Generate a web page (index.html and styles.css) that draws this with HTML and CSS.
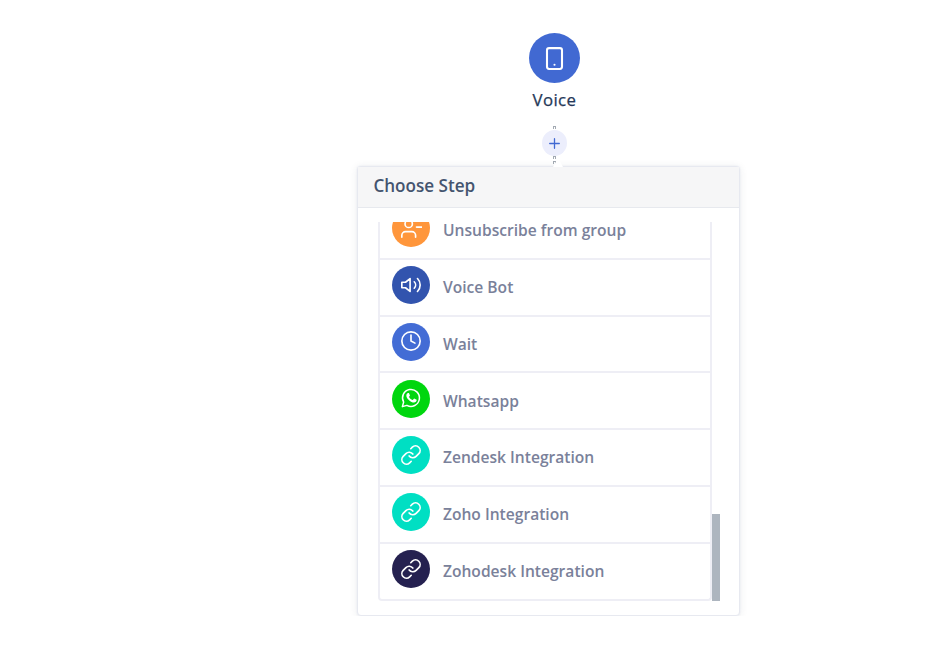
FILE: index.html
```html
<!DOCTYPE html>
<html lang="en">
<head>
<meta charset="utf-8">
<title>Choose Step</title>
<link rel="stylesheet" href="styles.css">
</head>
<body>
<svg class="defs" aria-hidden="true">
  <symbol id="link" viewBox="0 0 24 24"><path d="M10 13a5 5 0 0 0 7.54.54l3-3a5 5 0 0 0-7.07-7.07l-1.72 1.71"/><path d="M14 11a5 5 0 0 0-7.54-.54l-3 3a5 5 0 0 0 7.07 7.07l1.71-1.71"/></symbol>
</svg>
<main class="flow">
  <div class="node">
    <div class="node-icon"><svg viewBox="0 0 24 24"><rect x="4.8" y="2" width="14.4" height="20" rx="2"/><path d="M12 18h.01"/></svg></div>
    <div class="node-label">Voice</div>
  </div>
  <div class="connector">
    <span class="dash"></span>
    <button class="add" aria-label="Add step"><svg viewBox="0 0 11 11"><path d="M5.5 .7v9.6M.7 5.5h9.6"/></svg></button>
    <span class="dash"></span><span class="dash gap"></span>
  </div>
  <section class="panel">
    <h2 class="panel-title">Choose Step</h2>
    <div class="viewport">
      <ul class="steps">
        <li class="step"><span class="icon orange"><svg viewBox="0 0 24 24"><path d="M17 22v-2a4 4 0 0 0-4-4H6a4 4 0 0 0-4 4v2M24 11h-6"/><circle cx="9.5" cy="7.5" r="4"/></svg></span>Unsubscribe from group</li>
        <li class="step"><span class="icon navy"><svg viewBox="0 0 24 24"><path d="M11 5L6 9H2v6h4l5 4zM19.07 4.93a10 10 0 0 1 0 14.14M15.54 8.46a5 5 0 0 1 0 7.07"/></svg></span>Voice Bot</li>
        <li class="step"><span class="icon blue"><svg viewBox="0 0 24 24"><circle cx="12" cy="12" r="10"/><path d="M12 5.5V12l4.3 2.3"/></svg></span>Wait</li>
        <li class="step"><span class="icon green"><svg viewBox="-1 -1 26 26"><path d="M1.8 22.2l1.5-5.3A10 10 0 1 1 7.2 20.7z"/><path class="solid" d="M8.3 6.2h.9c.3 0 .5.2.6.5l.9 2.1c.1.3 0 .5-.9 1.6-.2.2-.1.4.1.7 1 1.6 2.2 2.5 3.8 3.2.3.1.5.1.7-.1l1-1.3c.3-.3.5-.2.8-.1l2 .9c.4.2.6.3.5.8-.1 1.7-1.3 2.9-3.2 2.9-3.6-.2-8.8-4.5-9-8.2 0-1.4.7-2.5 1.8-3z"/></svg></span>Whatsapp</li>
        <li class="step"><span class="icon teal"><svg><use href="#link"/></svg></span>Zendesk Integration</li>
        <li class="step"><span class="icon teal"><svg><use href="#link"/></svg></span>Zoho Integration</li>
        <li class="step"><span class="icon dark"><svg><use href="#link"/></svg></span>Zohodesk Integration</li>
      </ul>
      <div class="scrollbar"></div>
    </div>
  </section>
</main>
</body>
</html>
```
FILE: styles.css
```css
* { box-sizing: border-box; }
body {
  margin: 0;
  background: #fff;
  font-family: "Open Sans", sans-serif;
  overflow: hidden;
}
.defs { position: absolute; width: 0; height: 0; }
svg {
  display: block;
  fill: none;
  stroke: #fff;
  stroke-width: 2;
  stroke-linecap: round;
  stroke-linejoin: round;
}
.flow {
  width: 383px;
  margin-left: 357.4px;
  padding-top: 33px;
}
.node, .connector {
  display: flex;
  flex-direction: column;
  align-items: center;
  width: 394px;
}
.node-icon {
  display: grid;
  place-items: center;
  width: 51px;
  height: 50px;
  border-radius: 50%;
  background: #4169d2;
}
.node-icon svg { width: 25px; height: 25px; }
.node-label {
  height: 24px;
  margin-top: 5px;
  line-height: 24px;
  font-size: 16.8px;
  font-weight: 500;
  letter-spacing: .35px;
  color: #253858;
  -webkit-text-stroke: .25px #253858;
}
.connector { height: 54px; padding-top: 14px; }
.dash {
  width: 3px;
  height: 3px;
  border: 1px solid #a3aab3;
  border-bottom: 0;
}
.gap { margin-top: 2px; }
.add {
  display: grid;
  place-items: center;
  width: 25px;
  height: 26px;
  margin: 1px 0 0;
  padding: 0;
  border: 0;
  border-radius: 50%;
  background: #eceefc;
}
.add svg {
  width: 11px;
  height: 11px;
  stroke: #4169d2;
  stroke-width: 1.3;
}
.panel {
  position: relative;
  width: 383px;
  height: 450px;
  border: 1.5px solid #e7e9f0;
  border-radius: 4px;
  background: #fff;
  box-shadow: 0 0 2px #e4e7ef, 0 1px 8px rgba(40, 50, 70, .09);
}
.panel::before {
  content: "";
  position: absolute;
  top: -9px;
  left: 194.5px;
  border: 5px solid transparent;
  border-top: 0;
  border-bottom: 9px solid #fff;
}
.panel-title {
  height: 41px;
  margin: 0;
  padding-left: 15px;
  border-bottom: 1px solid #e7e9ee;
  background: #f6f6f7;
  line-height: 37px;
  font-size: 17.1px;
  font-weight: 600;
  color: #44546f;
}
.viewport {
  display: flex;
  align-items: flex-end;
  width: 342px;
  height: 378.5px;
  margin: 14px 0 0 19.8px;
  overflow: hidden;
}
.steps {
  flex: none;
  width: 334px;
  margin: 0;
  padding: 0;
  list-style: none;
  border: solid #eeeef5;
  border-width: 0 2px 2px;
  border-radius: 0 0 4px 4px;
}
.step {
  display: flex;
  align-items: center;
  gap: 12.7px;
  height: 56.75px;
  padding-left: 12.1px;
  border-bottom: 2px solid #eeeef5;
  line-height: 16px;
  font-size: 15.6px;
  font-weight: 600;
  color: #7a819a;
}
.step:last-child { height: 55px; border-bottom: 0; }
.icon {
  display: grid;
  place-items: center;
  width: 38px;
  height: 38px;
  margin-bottom: 4px;
  border-radius: 50%;
}
.icon svg {
  width: 22px;
  height: 22px;
  margin-bottom: 1px;
  stroke-width: 1.8;
}
.solid { fill: #fff; stroke: none; }
.orange { background: #ff963b; }
.navy { background: #3254ae; }
.blue { background: #436cd5; }
.green { background: #00d60e; }
.teal { background: #00dfc3; }
.dark { background: #252150; }
.scrollbar {
  flex: none;
  width: 8px;
  height: 87px;
  background: #adb5bf;
}
```
